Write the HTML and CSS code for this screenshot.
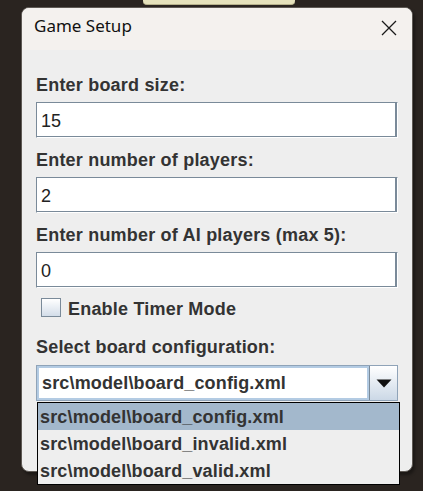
FILE: index.html
```html
<!DOCTYPE html>
<html lang="en">
<head>
<meta charset="utf-8">
<title>Game Setup</title>
<link rel="stylesheet" href="styles.css">
</head>
<body>
<div class="desk">
  <div class="backdrop-tab"></div>
  <div class="window">
    <div class="title-bar">
      <span class="title">Game Setup</span>
      <svg class="close" width="16" height="16" viewBox="0 0 16 16" aria-label="Close">
        <path d="M1 1 L15 15 M15 1 L1 15" stroke="#1a1a1a" stroke-width="1.3" fill="none"/>
      </svg>
    </div>
    <div class="content">
      <div class="label">Enter board size:</div>
      <div class="field">15</div>
      <div class="label">Enter number of players:</div>
      <div class="field">2</div>
      <div class="label">Enter number of AI players (max 5):</div>
      <div class="field">0</div>
      <div class="check-row">
        <span class="checkbox"></span>
        <span class="check-label">Enable Timer Mode</span>
      </div>
      <div class="label label-select">Select board configuration:</div>
      <div class="combo">
        <div class="combo-value">src\model\board_config.xml</div>
        <div class="combo-button">
          <svg width="16" height="9" viewBox="0 0 16 9"><path d="M0.5 0.5 H15.5 L8 8.5 Z" fill="#111"/></svg>
        </div>
        <ul class="popup">
          <li class="item selected">src\model\board_config.xml</li>
          <li class="item">src\model\board_invalid.xml</li>
          <li class="item">src\model\board_valid.xml</li>
        </ul>
      </div>
    </div>
  </div>
</div>
</body>
</html>
```
FILE: styles.css
```css
html, body {
  margin: 0;
  padding: 0;
  background: #2a2420;
}
.desk {
  width: 423px;
  height: 491px;
  overflow: hidden;
  background: #2a2420;
}
.backdrop-tab {
  margin-left: 143px;
  width: 152px;
  height: 5px;
  box-sizing: border-box;
  background: #e6e2bc;
  border-bottom: 1px solid #b7b28c;
  border-radius: 0 0 4px 4px;
}
.window {
  margin-top: 2px;
  margin-left: 21px;
  width: 392px;
  height: 465px;
  box-sizing: border-box;
  border: 1px solid #5e5954;
  border-radius: 8px;
  background: #eeeeee;
  position: relative;
  box-shadow: 2px 3px 3px rgba(0,0,0,0.35);
}
.title-bar {
  height: 42px;
  box-sizing: border-box;
  background: #f4f1ee;
  border-radius: 7px 7px 0 0;
  display: flex;
  justify-content: space-between;
  align-items: flex-start;
  padding: 6px 15px 0 12px;
}
.title {
  font-family: "Noto Sans", sans-serif;
  font-size: 17px;
  line-height: 23px;
  color: #111;
}
.close {
  margin-top: 6px;
}
.content {
  padding: 24px 14px 0 14px;
  display: flex;
  flex-direction: column;
  font-family: "Liberation Sans", Arial, sans-serif;
  color: #333333;
}
.label {
  font-weight: bold;
  font-size: 18px;
  line-height: 22px;
  letter-spacing: 0.2px;
  margin-bottom: 6px;
}
.label-select {
  margin-bottom: 7px;
}
.field {
  height: 36px;
  box-sizing: border-box;
  background: #fff;
  border-top: 1px solid #7a8a99;
  border-left: 1px solid #7a8a99;
  border-right: 1px solid #ffffff;
  border-bottom: 1px solid #ffffff;
  box-shadow: inset -2px -1px 0 #7a8a99;
  font-size: 18px;
  line-height: 30px;
  padding: 3px 0 0 4px;
  color: #222;
  margin-bottom: 11px;
}
.check-row {
  display: flex;
  align-items: flex-start;
  height: 22px;
  margin-top: -1px;
  margin-bottom: 16px;
}
.checkbox {
  width: 20px;
  height: 19px;
  box-sizing: border-box;
  margin-left: 5px;
  border: 1px solid #7a8a99;
  background: linear-gradient(to bottom, #ffffff, #d3dde9);
}
.check-label {
  font-weight: bold;
  font-size: 18px;
  line-height: 22px;
  letter-spacing: 0.2px;
  margin-left: 7px;
}
.combo {
  position: relative;
  display: flex;
  height: 36px;
  box-sizing: border-box;
  border: 1px solid #8fa3b8;
}
.combo-value {
  flex: 1;
  background: #fff;
  border: 2px solid #b3cbe3;
  font-weight: bold;
  font-size: 18px;
  line-height: 28px;
  letter-spacing: 0.15px;
  padding: 1px 0 0 3px;
  color: #333;
}
.combo-button {
  width: 28px;
  border-left: 1px solid #7a8a99;
  background: linear-gradient(to bottom, #ffffff, #cbd8e6);
  display: flex;
  align-items: flex-start;
  justify-content: center;
  padding-top: 13px;
  box-sizing: border-box;
}
.popup {
  position: absolute;
  top: 36px;
  left: 0px;
  width: 363px;
  margin: 0;
  padding: 0;
  list-style: none;
  box-sizing: border-box;
  border: 1px solid #000;
  background: #eeeeee;
  z-index: 2;
}
.item {
  height: 27px;
  font-weight: bold;
  font-size: 18px;
  line-height: 26px;
  letter-spacing: 0.15px;
  padding: 1px 0 0 2px;
  box-sizing: border-box;
  color: #333;
}
.item.selected {
  background: #a3b8cc;
}
```
